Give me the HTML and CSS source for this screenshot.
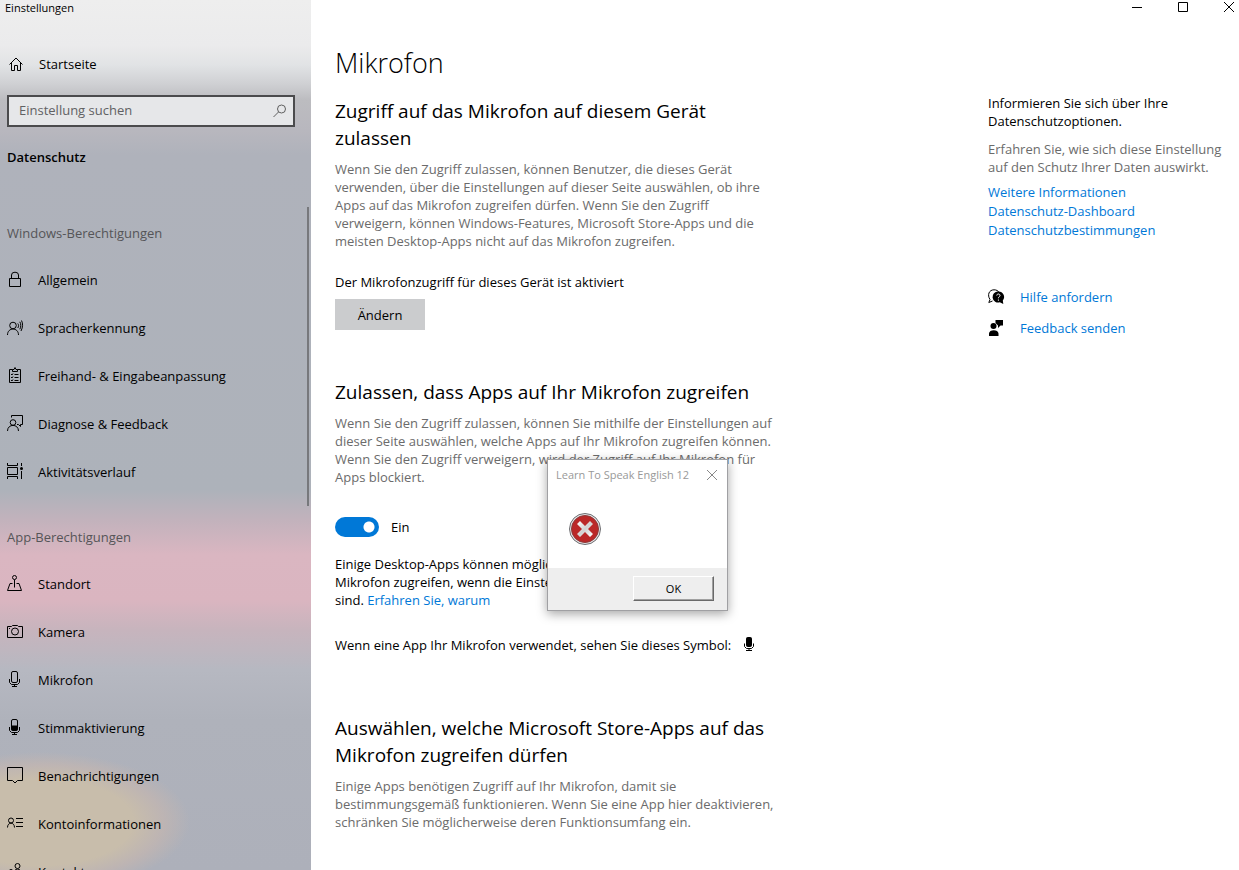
FILE: index.html
```html
<!DOCTYPE html>
<html lang="de">
<head>
<meta charset="utf-8">
<title>Einstellungen</title>
<link rel="stylesheet" href="styles.css">
</head>
<body>
<div class="window">
  <div class="sidebar">
    <div class="window-title">Einstellungen</div>
    <a class="nav-item home" href="#">
      <svg class="icon" viewBox="0 0 16 16"><path d="M1.500 8.500 8 2l6.500 6.500M3.500 7v7.500h3v-5h3v5h3V7"/></svg>
      <span>Startseite</span>
    </a>
    <label class="search">
      <input type="text" placeholder="Einstellung suchen" aria-label="Einstellung suchen">
      <svg class="icon glass" viewBox="0 0 16 16"><circle cx="9.500" cy="6" r="4"/><path d="M6.500 9 1.500 14"/></svg>
    </label>
    <h2 class="category">Datenschutz</h2>
    <nav class="nav">
      <h3 class="nav-label">Windows-Berechtigungen</h3>
      <a class="nav-item" href="#">
        <svg class="icon" viewBox="0 0 16 16"><path d="M2.500 6.500h11v8h-11zM4.500 6.500V3a3.500 2.800 0 0 1 7 0v3.500"/></svg>
        <span>Allgemein</span>
      </a>
      <a class="nav-item" href="#">
        <svg class="icon" viewBox="0 0 16 16"><circle cx="6" cy="5.500" r="3.300"/><path d="M.5 15c0-8 11-8 11 0M10.800 3.500c1 1.200 1 3 0 4.500M12.800 1.800c1.300 2 1.300 5 0 7.500M14.500.5c1.500 3 1.500 6.500-.5 10.500"/></svg>
        <span>Spracherkennung</span>
      </a>
      <a class="nav-item" href="#">
        <svg class="icon" viewBox="0 0 16 16"><path d="M5.500 1.500h-3v13h11v-13h-3M5.500 1.500v2h5v-2h-1.500L8-.5l-1 2zM7.500 6.500h4M7.500 9.500h4M7.500 12.500h4M4 6l1 1 1-1.500M4 9l1 1 1-1.500M4 12l1 1 1-1.500"/></svg>
        <span>Freihand- &amp; Eingabeanpassung</span>
      </a>
      <a class="nav-item" href="#">
        <svg class="icon" viewBox="0 0 16 16"><circle cx="6" cy="6.500" r="2.800"/><path d="M.5 15c0-7.500 11-7.500 11 0M4.500 1.500v-2h11v9h-2v2l-2-2h-1.500"/></svg>
        <span>Diagnose &amp; Feedback</span>
      </a>
      <a class="nav-item" href="#">
        <svg class="icon" viewBox="0 0 16 16"><path d="M.5 3.500h10v7H.5zM.5-1v2.500h10V-1M.5 15v-2.500h10V15M14.500-1v3M14.500 7v8"/><circle class="solid" cx="14.500" cy="4.500" r="1.500"/></svg>
        <span>Aktivitätsverlauf</span>
      </a>
      <h3 class="nav-label">App-Berechtigungen</h3>
      <a class="nav-item" href="#">
        <svg class="icon" viewBox="0 0 16 16"><circle cx="7.500" cy="1.500" r="2"/><path d="M7.500 3.500v8M5.500 7.500h-2.500l-2.500 7h14l-2.500-7H9.500"/></svg>
        <span>Standort</span>
      </a>
      <a class="nav-item" href="#">
        <svg class="icon" viewBox="0 0 16 16"><path d="M.5 2.500h4l1-1h5l1 1h4v11H.5zM2 4.500h1"/><circle cx="8" cy="7.500" r="3.500"/></svg>
        <span>Kamera</span>
      </a>
      <a class="nav-item" href="#">
        <svg class="icon" viewBox="0 0 16 16"><rect x="4.500" y="-.5" width="6" height="11" rx="1.500"/><path d="M2.500 7v3.500l2 2h6l2-2V7M7.500 12.500v2M5 14.500h5"/></svg>
        <span>Mikrofon</span>
      </a>
      <a class="nav-item" href="#">
        <svg class="icon" viewBox="0 0 16 16"><rect x="4.500" y="-.5" width="6" height="11" rx="1.500"/><path class="solid" d="M4.500 5.500h6v5h-6z"/><path d="M2.500 7v3.500l2 2h6l2-2V7M7.500 12.500v2M5 14.500h5"/></svg>
        <span>Stimmaktivierung</span>
      </a>
      <a class="nav-item" href="#">
        <svg class="icon" viewBox="0 0 16 16"><path d="M.5-.5h15v13h-5L8 15l-2.500-2.500h-5z"/></svg>
        <span>Benachrichtigungen</span>
      </a>
      <a class="nav-item" href="#">
        <svg class="icon" viewBox="0 0 16 16"><circle cx="4" cy="4.500" r="2.500"/><path d="M.5 11.500c0-5.800 7-5.800 7 0M9 2.500h7M9 6.500h7M9 10.500h7"/></svg>
        <span>Kontoinformationen</span>
      </a>
      <a class="nav-item" href="#">
        <svg class="icon" viewBox="0 0 16 16"><circle cx="10.500" cy="2" r="2.500"/><circle cx="4" cy="7.500" r="2"/><path d="M6.500 10c0-6.500 8-6.500 8 0M.5 14c0-5 7-5 7 0"/></svg>
        <span>Kontakte</span>
      </a>
    </nav>
  </div>

  <div class="pane">
    <div class="caption">
      <button type="button" aria-label="Minimieren"><svg viewBox="0 0 12 12"><path d="M1 6.500h10"/></svg></button>
      <button type="button" aria-label="Maximieren"><svg viewBox="0 0 12 12"><path d="M1.500 1.500h9v9h-9z"/></svg></button>
      <button type="button" aria-label="Schließen"><svg viewBox="0 0 12 12"><path d="m1 1 10 10M11 1 1 11"/></svg></button>
    </div>
    <div class="columns">
      <main class="content">
        <h1>Mikrofon</h1>
        <section>
          <h2>Zugriff auf das Mikrofon auf diesem Gerät<br>zulassen</h2>
          <p class="muted">Wenn Sie den Zugriff zulassen, können Benutzer, die dieses Gerät<br>verwenden, über die Einstellungen auf dieser Seite auswählen, ob ihre<br>Apps auf das Mikrofon zugreifen dürfen. Wenn Sie den Zugriff<br>verweigern, können Windows-Features, Microsoft Store-Apps und die<br>meisten Desktop-Apps nicht auf das Mikrofon zugreifen.</p>
          <p class="status">Der Mikrofonzugriff für dieses Gerät ist aktiviert</p>
          <button class="change" type="button">Ändern</button>
        </section>
        <section>
          <h2>Zulassen, dass Apps auf Ihr Mikrofon zugreifen</h2>
          <p class="muted">Wenn Sie den Zugriff zulassen, können Sie mithilfe der Einstellungen auf<br>dieser Seite auswählen, welche Apps auf Ihr Mikrofon zugreifen können.<br>Wenn Sie den Zugriff verweigern, wird der Zugriff auf Ihr Mikrofon für<br>Apps blockiert.</p>
          <label class="toggle"><input type="checkbox" role="switch" checked><span>Ein</span></label>
          <p>Einige Desktop-Apps können möglicherweise auf Ihr<br>Mikrofon zugreifen, wenn die Einstellungen hier deaktiviert<br>sind. <a href="#">Erfahren Sie, warum</a></p>
          <p class="hint">Wenn eine App Ihr Mikrofon verwendet, sehen Sie dieses Symbol:
            <svg class="mic" viewBox="0 0 12 16"><rect x="3.500" y=".5" width="5" height="9" rx="1"/><path d="M1.500 6.500v3l2 2h5l2-2v-3M6 11.500v2M3 13.500h6"/></svg></p>
        </section>
        <section>
          <h2>Auswählen, welche Microsoft Store-Apps auf das<br>Mikrofon zugreifen dürfen</h2>
          <p class="muted">Einige Apps benötigen Zugriff auf Ihr Mikrofon, damit sie<br>bestimmungsgemäß funktionieren. Wenn Sie eine App hier deaktivieren,<br>schränken Sie möglicherweise deren Funktionsumfang ein.</p>
        </section>
      </main>
      <aside class="info">
        <p>Informieren Sie sich über Ihre<br>Datenschutzoptionen.</p>
        <p class="muted">Erfahren Sie, wie sich diese Einstellung<br>auf den Schutz Ihrer Daten auswirkt.</p>
        <div class="links">
          <a href="#">Weitere Informationen</a>
          <a href="#">Datenschutz-Dashboard</a>
          <a href="#">Datenschutzbestimmungen</a>
        </div>
        <div class="support">
          <a href="#">
            <svg class="icon" viewBox="0 0 16 16"><path d="M2 10.500C-1 6 1 .8 6 .8c2.500 0 4 1 5 2.500M2 10.500.800 13.500 4.500 12"/><path class="solid" d="M10.300 2.500a5.500 5.500 0 1 0 1.500 10.700l3.500 1.800-.5-3.500A5.500 5.500 0 0 0 10.300 2.500z"/><path class="light" d="M8.800 6.500c0-2 3.200-2 3.200 0 0 1.200-1.600 1.200-1.600 2.800M10.400 10.500v1.200"/></svg>
            <span>Hilfe anfordern</span>
          </a>
          <a href="#">
            <svg class="icon" viewBox="0 0 16 16"><circle class="solid" cx="5.500" cy="6" r="3"/><path class="solid" d="M1 16v-2.500c0-4.500 9.500-4.500 9.500 0V16zM7.500 0H15v5.500h-2.500L10 8V5.500L7.500 3z"/></svg>
            <span>Feedback senden</span>
          </a>
        </div>
      </aside>
    </div>
  </div>

  <div class="dialog" role="alertdialog" aria-label="Learn To Speak English 12">
    <div class="dialog-title">
      <span>Learn To Speak English 12</span>
      <button type="button" aria-label="Schließen"><svg viewBox="0 0 12 12"><path d="m1 1 10 10M11 1 1 11"/></svg></button>
    </div>
    <div class="dialog-body">
      <svg class="error" viewBox="0 0 32 32">
        <defs><linearGradient id="cross" x1="0" y1="0" x2="1" y2="1"><stop offset="0" stop-color="#fff"/><stop offset=".5" stop-color="#d2d2d2"/><stop offset="1" stop-color="#fff"/></linearGradient></defs>
        <circle cx="16" cy="16" r="15.500" fill="#e4e4e6" stroke="#6d6d70"/>
        <circle cx="16" cy="16" r="13.500" fill="#bb2828" stroke="#8c3a3a"/>
        <path d="m8 11 3-3 5 5 5-5 3 3-5 5 5 5-3 3-5-5-5 5-3-3 5-5z" fill="url(#cross)"/>
      </svg>
    </div>
    <div class="dialog-actions"><button type="button">OK</button></div>
  </div>
</div>
</body>
</html>
```
FILE: styles.css
```css
* { box-sizing: border-box; }

body {
  margin: 0;
  background: #fff;
  color: #000;
  font: 13px/18px "Open Sans", "Noto Sans", sans-serif;
}

h1, h2, h3, p { margin: 0; font-weight: 400; }
a { color: #0078d7; text-decoration: none; }
button { font: inherit; color: inherit; }

.window {
  position: relative;
  display: flex;
  height: 100vh;
  overflow: hidden;
}

/* Sidebar */
.sidebar {
  flex: 0 0 311px;
  display: flex;
  flex-direction: column;
  overflow: hidden;
  background:
    radial-gradient(ellipse 150px 70px at 40px 822px, #c8bdab 0, #c8bdab 62%, rgba(196, 182, 176, .7) 82%, rgba(176, 179, 188, 0) 100%),
    linear-gradient(#eee 0, #ebebec 45px, #e1e3e5 65px, #cfd0d3 84px, #bcbcc0 100px, #b8b7be 130px, #afb2bb 155px, #adb2ba 490px, #c2b2bc 520px, #dab6c1 555px, #dab5c0 600px, #c7b4bd 630px, #b6b8c1 670px, #afb2bb 720px, #adb0ba 870px);
}

.window-title {
  padding-left: 5px;
  font-size: 11px;
  line-height: 16px;
}

.icon {
  flex: none;
  width: 16px;
  height: 16px;
  fill: none;
  stroke: #000;
  overflow: visible;
}
.solid { fill: #000; stroke: none; }
.light { stroke: #fff; }

.nav-item {
  display: flex;
  align-items: center;
  gap: 15px;
  height: 48px;
  padding-left: 7px;
  color: #000;
}
.home { flex: none; margin-top: 24px; padding-left: 8px; }

.search {
  flex: none;
  display: flex;
  align-items: center;
  height: 32px;
  margin: 7px 16px 0 7px;
  padding: 0 5px 0 10px;
  border: 2px solid #4b4b4d;
  background: #e6e7e9;
}
.search input {
  flex: 1;
  min-width: 0;
  padding: 0 0 2px;
  border: 0;
  outline: 0;
  background: none;
  font: inherit;
}
.search input::placeholder { color: #616163; opacity: 1; }
.glass { stroke: #606060; }

.category {
  margin: 20px 0 0 7px;
  font-size: 13px;
  line-height: 20px;
  font-weight: 600;
}

.nav {
  flex: 1;
  min-height: 0;
  margin-top: 40px;
  padding-top: 16px;
  overflow: hidden;
  background: linear-gradient(#77787c, #77787c) right 2px top / 2px 299px no-repeat;
}
.nav-label {
  margin: 0 0 13px 7px;
  color: #555558;
  font-size: 13px;
  line-height: 20px;
}
.nav-item + .nav-label { margin-top: 31px; }

/* Main pane */
.pane { flex: 1; min-width: 0; }

.caption {
  display: flex;
  justify-content: flex-end;
  height: 14px;
  margin-right: -13px;
}
.caption button {
  display: flex;
  align-items: center;
  justify-content: center;
  width: 46px;
  padding: 0;
  border: 0;
  background: none;
}
.caption svg, .dialog-title svg {
  width: 12px;
  height: 12px;
  fill: none;
  stroke: #000;
}

.columns { display: flex; padding-left: 24px; }
.content { flex: 1; min-width: 0; padding-top: 29px; white-space: nowrap; }

h1 { font-size: 27px; line-height: 40px; font-weight: 300; }
.content h2 { margin-bottom: 8px; font-size: 19px; line-height: 27px; }
section { margin-bottom: 49px; }
section:first-of-type { margin-top: 15px; }
.muted { color: #6b6b6b; }
.status { margin-top: 23px; }

.change {
  display: block;
  width: 90px;
  height: 31px;
  margin-top: 8px;
  padding: 0;
  border: 0;
  background: #cbccce;
}

.toggle {
  display: flex;
  align-items: center;
  gap: 12px;
  height: 20px;
  margin: 31px 0 18px;
}
.toggle input {
  appearance: none;
  width: 44px;
  height: 20px;
  margin: 0;
  border-radius: 10px;
  background: radial-gradient(circle at 34px 10px, #fff 5px, #0078d7 6px);
}

.hint { display: flex; align-items: center; gap: 12px; margin: 27px 0 61px; }
.mic { width: 12px; height: 16px; stroke: #000; }
.mic path { fill: none; }

.info { flex: 0 0 251px; padding-top: 80px; white-space: nowrap; }
.info p + p { margin-top: 10px; }
.links {
  display: flex;
  flex-direction: column;
  align-items: flex-start;
  margin-top: 7px;
  line-height: 19px;
}
.support { display: grid; gap: 13px; margin-top: 48px; }
.support a { display: flex; align-items: center; gap: 16px; }

/* Message box */
.dialog {
  position: absolute;
  left: 547px;
  top: 459px;
  width: 181px;
  border: 1px solid #a0a0a3;
  background: #fff;
  box-shadow: 0 3px 10px rgba(0, 0, 0, .35);
}
.dialog-title {
  display: flex;
  align-items: center;
  justify-content: space-between;
  height: 30px;
  padding: 0 9px 0 8px;
  color: #999;
  font-size: 11px;
  white-space: nowrap;
}
.dialog-title button { display: flex; padding: 0; border: 0; background: none; }
.dialog-title svg { stroke: #888; }
.dialog-body { height: 78px; padding: 23px 21px; }
.error { display: block; width: 32px; height: 32px; }
.dialog-actions {
  display: flex;
  justify-content: flex-end;
  padding: 8px 13px 9px;
  background: #eee;
}
.dialog-actions button {
  width: 81px;
  height: 25px;
  padding: 0;
  border: 1px solid;
  border-color: #fff #696969 #696969 #fff;
  background: #eee;
  box-shadow: inset -1px -1px #a0a0a0;
  font-size: 11px;
}
```
